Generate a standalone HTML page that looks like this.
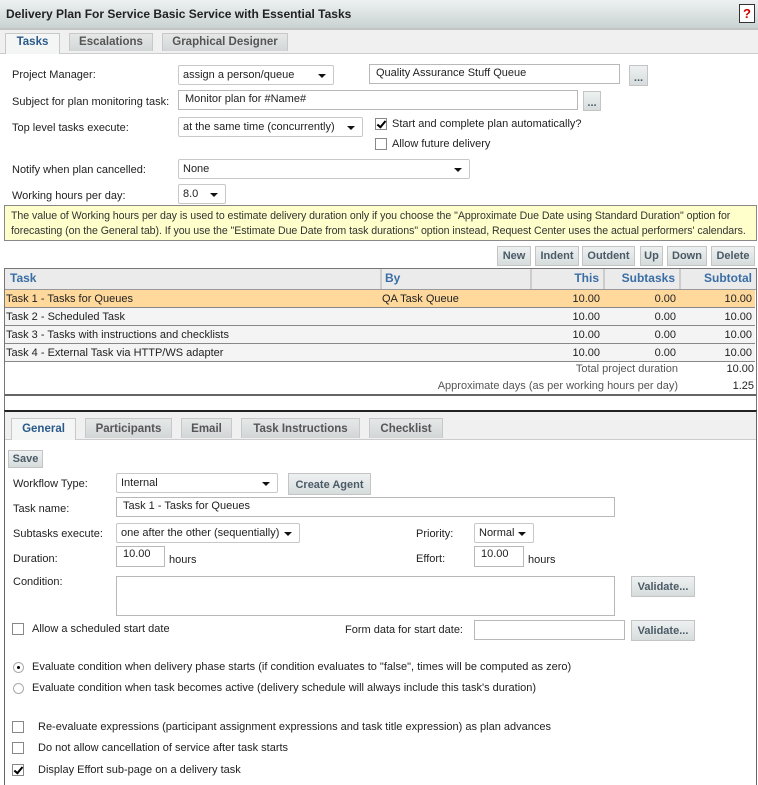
<!DOCTYPE html>
<html><head><meta charset="utf-8"><style>
*{box-sizing:border-box;margin:0;padding:0}
body{width:758px;height:785px;position:relative;background:#fff;font-family:"Liberation Sans",sans-serif;font-size:11px;color:#222;overflow:hidden}
.a{position:absolute;white-space:nowrap}
.inp{position:absolute;border:1px solid #b8b8b8;background:#fff;padding:2px 6px;font-size:11px;white-space:nowrap}
.sel{position:absolute;border:1px solid #c8c8c8;border-radius:2px;background:#fff;padding:3px 4px;font-size:11px;white-space:nowrap}
.sel:after{content:"";position:absolute;right:7px;top:8px;border-left:4px solid transparent;border-right:4px solid transparent;border-top:4px solid #111}
.btn{position:absolute;border:1px solid #c4c4c4;background:linear-gradient(#eef1f1,#d6dcdc);color:#4a5a66;font-weight:bold;font-size:11px;text-align:center;line-height:16px}
.tab{position:absolute;background:linear-gradient(#e6e8e8,#d2d6d6);border:1px solid #c8c8c8;border-bottom:none;color:#555;font-weight:bold;font-size:11.5px;text-align:center;line-height:17px}
.tab.on{background:#f4f6f6;color:#2a5a8a}
.cb{position:absolute;width:12px;height:12px;border:1px solid #888;background:#fff}
.cb.k:after{content:"";position:absolute;left:3px;top:0;width:3px;height:7px;border:solid #000;border-width:0 2px 2px 0;transform:rotate(40deg)}
.rd{position:absolute;width:11px;height:11px;border:1px solid #aaa;border-radius:50%;background:#fff}
.rd.k:after{content:"";position:absolute;left:3px;top:3px;width:3px;height:3px;border-radius:50%;background:#000}
.row{position:absolute;left:5px;width:750px;height:18px;border-bottom:1px solid #888;line-height:18px}
.row span{position:absolute}
.r{text-align:right}
</style></head><body>
<div class="a" style="left:0;top:0;width:758px;height:28px;background:linear-gradient(#eef1f1,#c9d2d2)"></div>
<div class="a" style="left:6px;top:7px;font-weight:bold;font-size:12px;color:#222">Delivery Plan For Service Basic Service with Essential Tasks</div>
<div class="a" style="left:739px;top:4px;width:16px;height:19px;border:1px solid #333;background:#fff;color:#c00;font-weight:bold;font-size:13px;text-align:center;line-height:17px">?</div>
<div class="a" style="left:0;top:28px;width:758px;height:2px;background:#c4c4c4"></div>
<div class="a" style="left:0;top:30px;width:758px;height:24px;background:#f0f0f0;border-bottom:1px solid #ccc"></div>
<div class="tab on" style="left:5px;top:33px;width:55px;height:21px">Tasks</div>
<div class="tab" style="left:69px;top:33px;width:84px;height:18px">Escalations</div>
<div class="tab" style="left:162px;top:33px;width:126px;height:18px">Graphical Designer</div>

<div class="a" style="left:12px;top:69px">Project Manager:</div>
<div class="sel" style="left:178px;top:65px;width:156px;height:20px">assign a person/queue</div>
<div class="inp" style="left:369px;top:64px;width:251px;height:20px">Quality Assurance Stuff Queue</div>
<div class="btn" style="left:629px;top:65px;width:19px;height:21px;line-height:24px">...</div>
<div class="a" style="left:12px;top:96px">Subject for plan monitoring task:</div>
<div class="inp" style="left:178px;top:90px;width:400px;height:20px">Monitor plan for #Name#</div>
<div class="btn" style="left:583px;top:91px;width:18px;height:20px;line-height:22px">...</div>
<div class="a" style="left:12px;top:122px">Top level tasks execute:</div>
<div class="sel" style="left:178px;top:117px;width:185px;height:20px">at the same time (concurrently)</div>
<div class="cb k" style="left:375px;top:118px"></div>
<div class="a" style="left:392px;top:118px">Start and complete plan automatically?</div>
<div class="cb" style="left:375px;top:138px"></div>
<div class="a" style="left:392px;top:138px">Allow future delivery</div>
<div class="a" style="left:12px;top:164px">Notify when plan cancelled:</div>
<div class="sel" style="left:178px;top:159px;width:292px;height:20px">None</div>
<div class="a" style="left:12px;top:190px">Working hours per day:</div>
<div class="sel" style="left:178px;top:184px;width:48px;height:20px">8.0</div>

<div class="a" style="left:4px;top:205px;width:753px;height:36px;background:#ffffcc;border:1px solid #888;white-space:normal;padding:3px 6px;font-size:10.6px;line-height:15px;color:#333;letter-spacing:-0.05px">The value of Working hours per day is used to estimate delivery duration only if you choose the "Approximate Due Date using Standard Duration" option for forecasting (on the General tab). If you use the "Estimate Due Date from task durations" option instead, Request Center uses the actual performers' calendars.</div>

<div class="btn" style="left:497px;top:246px;width:34px;height:20px;line-height:18px">New</div>
<div class="btn" style="left:535px;top:246px;width:44px;height:20px;line-height:18px">Indent</div>
<div class="btn" style="left:582px;top:246px;width:53px;height:20px;line-height:18px">Outdent</div>
<div class="btn" style="left:640px;top:246px;width:23px;height:20px;line-height:18px">Up</div>
<div class="btn" style="left:667px;top:246px;width:40px;height:20px;line-height:18px">Down</div>
<div class="btn" style="left:711px;top:246px;width:44px;height:20px;line-height:18px">Delete</div>

<div class="a" style="left:4px;top:268px;width:753px;height:128px;border:1px solid #777;border-bottom:2px solid #666"></div>
<div class="a" style="left:5px;top:269px;width:751px;height:21px;background:#ebebeb;border-bottom:1px solid #999;color:#3a6ea5;font-weight:bold;font-size:12px;line-height:19px">
<span class="a" style="left:5px">Task</span>
<span class="a" style="left:375px;border-left:2px solid #ccc;padding-left:3px;height:20px">By</span>
<span class="a r" style="left:525px;width:73px;border-left:2px solid #ccc;height:20px;padding-right:4px">This</span>
<span class="a r" style="left:598px;width:76px;border-left:2px solid #ccc;height:20px;padding-right:4px">Subtasks</span>
<span class="a r" style="left:674px;width:77px;border-left:2px solid #ccc;height:20px;padding-right:4px">Subtotal</span></div>
<div class="row" style="top:290px;background:#ffd89b"><span style="left:1px">Task 1 - Tasks for Queues</span><span style="left:377px">QA Task Queue</span><span class="r" style="right:155px">10.00</span><span class="r" style="right:79px">0.00</span><span class="r" style="right:3px">10.00</span></div>
<div class="row" style="top:308px;background:#f4f4f4"><span style="left:1px">Task 2 - Scheduled Task</span><span class="r" style="right:155px">10.00</span><span class="r" style="right:79px">0.00</span><span class="r" style="right:3px">10.00</span></div>
<div class="row" style="top:326px;background:#f4f4f4"><span style="left:1px">Task 3 - Tasks with instructions and checklists</span><span class="r" style="right:155px">10.00</span><span class="r" style="right:79px">0.00</span><span class="r" style="right:3px">10.00</span></div>
<div class="row" style="top:344px;background:#f4f4f4"><span style="left:1px">Task 4 - External Task via HTTP/WS adapter</span><span class="r" style="right:155px">10.00</span><span class="r" style="right:79px">0.00</span><span class="r" style="right:3px">10.00</span></div>
<div class="a" style="right:80px;top:363px;color:#555">Total project duration</div>
<div class="a" style="right:4px;top:363px">10.00</div>
<div class="a" style="right:80px;top:380px;color:#555">Approximate days (as per working hours per day)</div>
<div class="a" style="right:4px;top:380px">1.25</div>

<div class="a" style="left:4px;top:396px;width:1px;height:16px;background:#777"></div>
<div class="a" style="left:756px;top:396px;width:1px;height:16px;background:#777"></div>
<div class="a" style="left:4px;top:410px;width:753px;height:375px;border:1px solid #666;border-top:2px solid #222;border-bottom:none"></div>
<div class="a" style="left:5px;top:412px;width:751px;height:28px;background:#f0f0f0;border-bottom:1px solid #ccc"></div>
<div class="tab on" style="left:11px;top:418px;width:65px;height:22px;line-height:21px">General</div>
<div class="tab" style="left:85px;top:418px;width:87px;height:20px;line-height:20px">Participants</div>
<div class="tab" style="left:181px;top:418px;width:51px;height:20px;line-height:20px">Email</div>
<div class="tab" style="left:241px;top:418px;width:119px;height:20px;line-height:20px">Task Instructions</div>
<div class="tab" style="left:369px;top:418px;width:74px;height:20px;line-height:20px">Checklist</div>

<div class="btn" style="left:8px;top:450px;width:35px;height:18px">Save</div>
<div class="a" style="left:13px;top:478px">Workflow Type:</div>
<div class="sel" style="left:116px;top:473px;width:162px;height:20px">Internal</div>
<div class="btn" style="left:288px;top:473px;width:83px;height:22px;line-height:22px">Create Agent</div>
<div class="a" style="left:13px;top:503px">Task name:</div>
<div class="inp" style="left:116px;top:497px;width:499px;height:20px">Task 1 - Tasks for Queues</div>
<div class="a" style="left:13px;top:528px">Subtasks execute:</div>
<div class="sel" style="left:116px;top:523px;width:184px;height:20px">one after the other (sequentially)</div>
<div class="a" style="left:416px;top:528px">Priority:</div>
<div class="sel" style="left:474px;top:523px;width:60px;height:20px">Normal</div>
<div class="a" style="left:13px;top:553px">Duration:</div>
<div class="inp" style="left:116px;top:546px;width:49px;height:21px;padding-top:1px">10.00</div>
<div class="a" style="left:169px;top:554px">hours</div>
<div class="a" style="left:416px;top:553px">Effort:</div>
<div class="inp" style="left:474px;top:546px;width:50px;height:21px;padding-top:1px">10.00</div>
<div class="a" style="left:528px;top:554px">hours</div>
<div class="a" style="left:13px;top:576px">Condition:</div>
<div class="inp" style="left:116px;top:576px;width:499px;height:40px"></div>
<div class="btn" style="left:631px;top:576px;width:64px;height:21px;line-height:20px">Validate...</div>
<div class="cb" style="left:12px;top:623px"></div>
<div class="a" style="left:32px;top:623px">Allow a scheduled start date</div>
<div class="a" style="left:345px;top:624px">Form data for start date:</div>
<div class="inp" style="left:474px;top:620px;width:151px;height:20px"></div>
<div class="btn" style="left:631px;top:620px;width:64px;height:21px;line-height:20px">Validate...</div>
<div class="rd k" style="left:13px;top:662px"></div>
<div class="a" style="left:32px;top:661px">Evaluate condition when delivery phase starts (if condition evaluates to "false", times will be computed as zero)</div>
<div class="rd" style="left:13px;top:683px"></div>
<div class="a" style="left:32px;top:682px">Evaluate condition when task becomes active (delivery schedule will always include this task's duration)</div>
<div class="cb" style="left:12px;top:721px"></div>
<div class="a" style="left:38px;top:721px">Re-evaluate expressions (participant assignment expressions and task title expression) as plan advances</div>
<div class="cb" style="left:12px;top:742px"></div>
<div class="a" style="left:38px;top:742px">Do not allow cancellation of service after task starts</div>
<div class="cb k" style="left:12px;top:764px"></div>
<div class="a" style="left:38px;top:764px">Display Effort sub-page on a delivery task</div>
</body></html>
